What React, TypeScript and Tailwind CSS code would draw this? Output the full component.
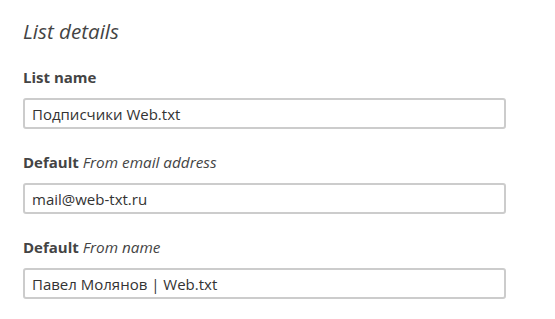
const fields = [
  { label: "List name", hint: "", value: "Подписчики Web.txt" },
  { label: "Default", hint: "From email address", value: "mail@web-txt.ru" },
  { label: "Default", hint: "From name", value: "Павел Молянов | Web.txt" },
];

export default function App() {
  return (
    <div className="min-h-screen bg-white pl-[23px] pt-[17px] font-['Open_Sans',sans-serif] text-[#444]">
      <h2 className="text-[20.6px] italic leading-[28px] text-[#444]">List details</h2>
      <div className="mt-[22px] flex flex-col gap-[23px]">
        {fields.map((f) => (
          <div key={f.value} className="flex flex-col gap-[11px]">
            <label className="text-[15px] font-bold leading-[20px]">
              {f.label}
              {f.hint && <span className="text-[15.3px] font-normal italic"> {f.hint}</span>}
            </label>
            <input
              readOnly
              value={f.value}
              className="h-[31px] w-[483px] rounded-[3px] border-2 border-[#ccc] bg-white px-[7px] text-[15px] text-[#333] outline-none"
            />
          </div>
        ))}
      </div>
    </div>
  );
}
